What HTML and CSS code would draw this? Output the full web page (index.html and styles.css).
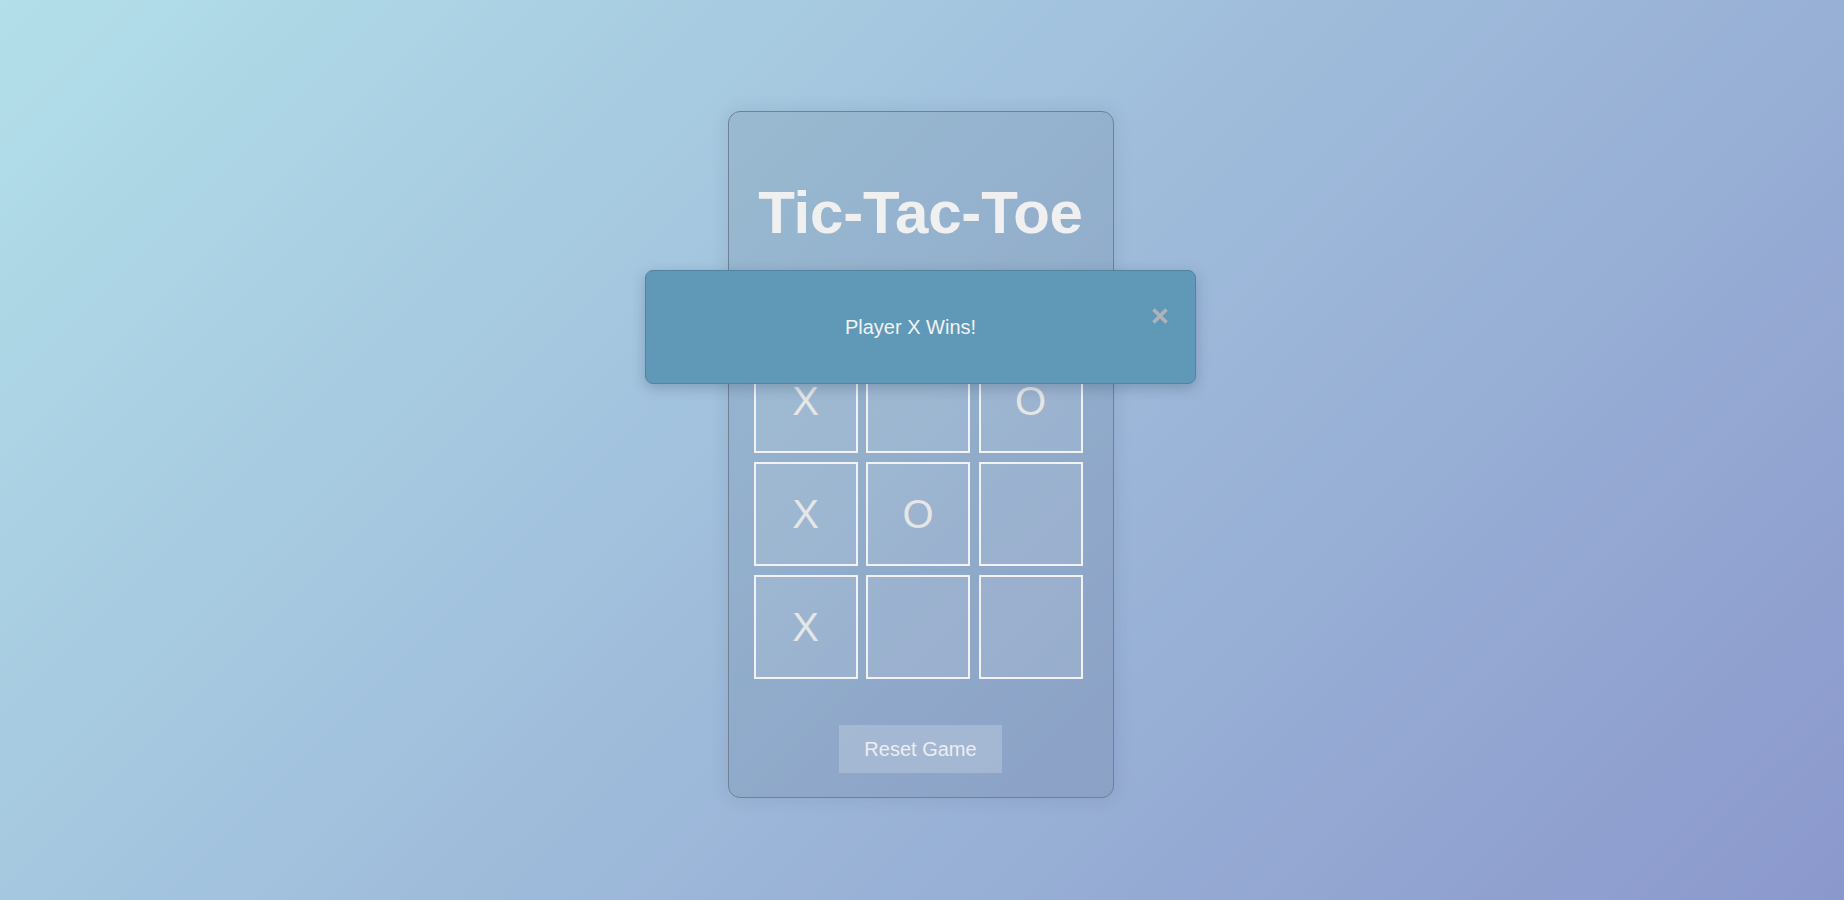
FILE: index.html
```html
<!DOCTYPE html>
<html lang="en">
<head>
<meta charset="utf-8">
<title>Tic-Tac-Toe</title>
<link rel="stylesheet" href="styles.css">
</head>
<body>
  <main class="game">
    <h1 class="title">Tic-Tac-Toe</h1>
    <div class="board">
      <div class="cell">X</div>
      <div class="cell"></div>
      <div class="cell">O</div>
      <div class="cell">X</div>
      <div class="cell">O</div>
      <div class="cell"></div>
      <div class="cell">X</div>
      <div class="cell"></div>
      <div class="cell"></div>
    </div>
    <button class="reset">Reset Game</button>
  </main>
  <div class="notice">
    <span class="notice-text">Player X Wins!</span>
    <span class="notice-close" aria-label="close">
      <svg width="16" height="16" viewBox="0 0 16 16"><path d="M1.5 1.5 L14.5 14.5 M14.5 1.5 L1.5 14.5" stroke="#aeb3b8" stroke-width="3.6" fill="none"/></svg>
    </span>
  </div>
</body>
</html>
```
FILE: styles.css
```css
html, body {
  margin: 0;
  height: 100%;
}
body {
  font-family: "Liberation Sans", Arial, sans-serif;
  background: linear-gradient(135deg, #b2dfe9 0%, #8b98cc 100%);
  display: flex;
  justify-content: center;
  align-items: flex-start;
  padding-right: 3px;
  box-sizing: border-box;
}
.game {
  margin-top: 111px;
  width: 386px;
  height: 687px;
  box-sizing: border-box;
  border: 1px solid #6f8098;
  border-radius: 12px;
  background: rgba(20, 30, 50, 0.09);
  box-shadow: 0 0 18px rgba(40, 60, 90, 0.12);
  display: flex;
  flex-direction: column;
  align-items: center;
  padding: 0 0 24px;
}
.title {
  margin: 66px 0 0;
  font-size: 60px;
  line-height: 69px;
  font-weight: bold;
  letter-spacing: -0.2px;
  color: #f0f0f0;
  text-align: center;
  white-space: nowrap;
}
.board {
  margin-top: 102px;
  align-self: flex-start;
  margin-left: 25px;
  display: grid;
  grid-template-columns: repeat(3, 104px);
  grid-template-rows: repeat(3, 104px);
  gap: 9px 8.5px;
}
.cell {
  box-sizing: border-box;
  border: 2px solid #f2f2f2;
  background: rgba(255, 255, 255, 0.1);
  display: flex;
  align-items: center;
  justify-content: center;
  font-size: 40px;
  color: #e6e6e6;
}
.reset {
  margin-top: 46px;
  height: 48px;
  padding: 0 25px;
  border: none;
  background: rgba(255, 255, 255, 0.2);
  color: #eceef2;
  font-family: "Liberation Sans", Arial, sans-serif;
  font-size: 20px;
}
.notice {
  position: absolute;
  left: 645px;
  top: 270px;
  width: 551px;
  height: 114px;
  box-sizing: border-box;
  border: 1px solid #52839f;
  border-radius: 8px;
  background: #6099b8;
  box-shadow: 0 4px 14px rgba(30, 50, 80, 0.25);
  display: flex;
  align-items: center;
  justify-content: center;
  padding-right: 20px;
}
.notice-text {
  font-size: 20px;
  color: #f2f2f2;
}
.notice-close {
  position: absolute;
  left: 506px;
  top: 37px;
  width: 16px;
  height: 16px;
  display: block;
}
.notice-close svg {
  display: block;
}
```
